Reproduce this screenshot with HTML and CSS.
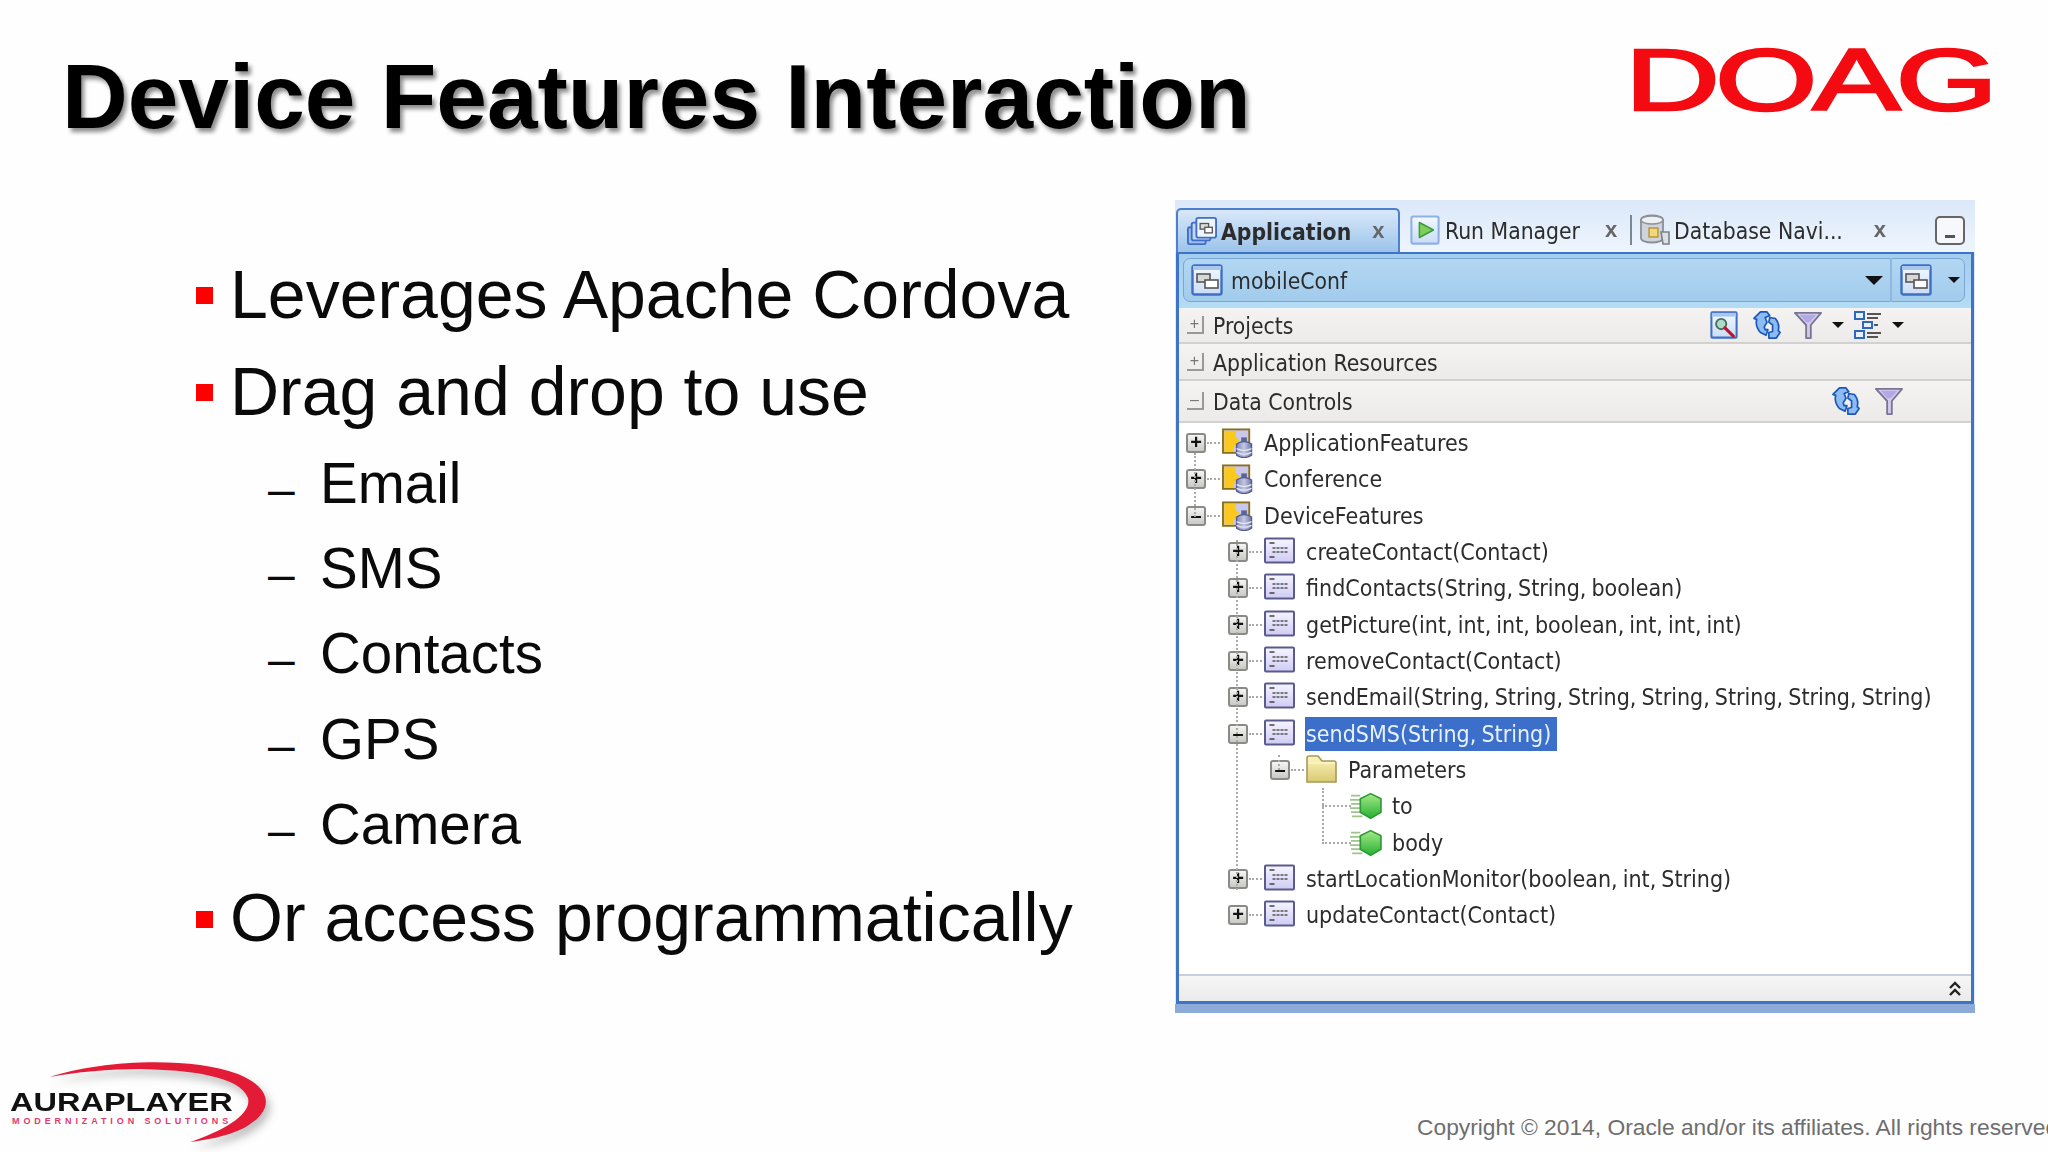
FILE: index.html
```html
<!DOCTYPE html>
<html lang="en">
<head>
<meta charset="utf-8">
<title>Device Features Interaction</title>
<link rel="stylesheet" href="styles.css">
</head>
<body>
<svg class="defs" width="0" height="0">
  <defs>
    <linearGradient id="pg" x1="0" y1="0" x2="0" y2="1"><stop offset="0" stop-color="#f6f5ff"/><stop offset="1" stop-color="#cfcbf4"/></linearGradient>
    <linearGradient id="fg" x1="0" y1="0" x2="0" y2="1"><stop offset="0" stop-color="#fdf6c0"/><stop offset="1" stop-color="#d9c970"/></linearGradient>
    <linearGradient id="gg" x1="0" y1="0" x2="0" y2="1"><stop offset="0" stop-color="#a6ea8a"/><stop offset="1" stop-color="#25b030"/></linearGradient>
    <linearGradient id="wg" x1="0" y1="0" x2="0" y2="1"><stop offset="0" stop-color="#f4f9ff"/><stop offset="1" stop-color="#c9dcf6"/></linearGradient>
    <linearGradient id="cy" x1="0" y1="0" x2="1" y2="0"><stop offset="0" stop-color="#7f86b8"/><stop offset=".5" stop-color="#c4c8e2"/><stop offset="1" stop-color="#6e74a6"/></linearGradient>
    <symbol id="win" viewBox="0 0 32 32"><rect x="1.5" y="1.5" width="29" height="29" rx="2" fill="url(#wg)" stroke="#3f6fc4" stroke-width="2.4"/><rect x="2" y="2" width="28" height="4" fill="#a9c7ee"/><rect x="6" y="10" width="13" height="8" fill="#d8d8d8" stroke="#555" stroke-width="1.6"/><rect x="14" y="16" width="13" height="8" fill="#fff" stroke="#555" stroke-width="1.6"/></symbol>
    <symbol id="app" viewBox="0 0 32 32"><rect x="1" y="12" width="19" height="18" rx="2" fill="#9dbdec" stroke="#3f6fc4" stroke-width="2"/><rect x="5" y="7" width="20" height="19" rx="2" fill="#c4d8f5" stroke="#3f6fc4" stroke-width="2"/><rect x="10" y="2" width="21" height="21" rx="2" fill="#eef4fd" stroke="#3f6fc4" stroke-width="2"/><rect x="14" y="8" width="9" height="6" fill="#ddd" stroke="#555" stroke-width="1.4"/><rect x="19" y="12" width="8" height="6" fill="#fff" stroke="#555" stroke-width="1.4"/></symbol>
    <symbol id="run" viewBox="0 0 32 32"><rect x="1.5" y="1.5" width="29" height="29" rx="2" fill="url(#wg)" stroke="#8fb0e2" stroke-width="2.2"/><path d="M10 8 L25 16 L10 24 Z" fill="#7ed05a" stroke="#3c9a3c" stroke-width="1.6" stroke-linejoin="round"/></symbol>
    <symbol id="db" viewBox="0 0 32 32"><path d="M2 6 C2 0 24 0 24 6 V24 C24 30 2 30 2 24 Z" fill="#cfd3da" stroke="#8a8f99" stroke-width="1.8"/><ellipse cx="13" cy="6" rx="11" ry="4" fill="#eef0f3" stroke="#8a8f99" stroke-width="1.4"/><rect x="10" y="14" width="9" height="9" fill="#f3d77a" stroke="#a98a26" stroke-width="1.2"/><path d="M22 18 h8 v12 h-6 z" fill="#dde1e6" stroke="#7b808a" stroke-width="1.6"/></symbol>
    <symbol id="find" viewBox="0 0 30 30"><rect x="1.5" y="1.5" width="27" height="27" rx="1" fill="url(#wg)" stroke="#3f6fc4" stroke-width="2.2"/><rect x="2" y="2" width="26" height="4" fill="#a9c7ee"/><circle cx="12" cy="14" r="5.5" fill="#a9dcc9" stroke="#4b6a5c" stroke-width="2"/><path d="M16 18 L25 27" stroke="#c0142c" stroke-width="3.4" stroke-linecap="round"/></symbol>
    <symbol id="sync" viewBox="0 0 30 30"><path d="M8 1 H15 L18 5 L13 7 L15 12 L12 17 L13 20 H16 L14 26 L8 23 Q2 16 4 9 L1 8 Z" fill="#8cbcf2" stroke="#1c57b8" stroke-width="1.8" stroke-linejoin="round"/><path d="M18 7 L24 8 Q29 14 27 21 L29 23 L25 29 H17 V23 L21 22 L21 15 L17 12 Z" fill="#8cbcf2" stroke="#1c57b8" stroke-width="1.8" stroke-linejoin="round"/></symbol>
    <symbol id="filter" viewBox="0 0 30 30"><path d="M1 2 H29 L18 15 V29 H13 V15 Z" fill="#d3cdf0" stroke="#7a7690" stroke-width="2" stroke-linejoin="round"/><path d="M6 4 H24 L17 12 H13 Z" fill="#b2a9e6"/></symbol>
    <symbol id="hier" viewBox="0 0 28 28"><rect x="1" y="1" width="9" height="7" fill="#e8f1ff" stroke="#2e66c0" stroke-width="2"/><rect x="9" y="11" width="9" height="6" fill="#e8f1ff" stroke="#2e66c0" stroke-width="2"/><rect x="1" y="20" width="9" height="7" fill="#e8f1ff" stroke="#2e66c0" stroke-width="2"/><path d="M13 3 H27 M13 7 H24 M20 14 H24 M13 22 H27 M13 26 H24" stroke="#555" stroke-width="2"/></symbol>
    <symbol id="df" viewBox="0 0 34 32"><rect x="1.5" y="1.5" width="28" height="25" fill="#c9c8ea" stroke="#8a6f20" stroke-width="2"/><path d="M3 3 H15 V9 L19 13 L13 21 V25 H3 Z" fill="#fbc81e"/><path d="M21 10 H27 V15 H21 Z" fill="#5d6496"/><path d="M16 17 Q24 12 32 17 V29 Q24 34 16 29 Z" fill="url(#cy)" stroke="#4f5a8f" stroke-width="1.4"/><path d="M16 22 Q24 26 32 22 M16 26 Q24 30 32 26" fill="none" stroke="#e6e8f4" stroke-width="1.2"/></symbol>
    <symbol id="method" viewBox="0 0 32 30"><rect x="1.5" y="1.5" width="29" height="24" rx="1" fill="url(#pg)" stroke="#5b5a8c" stroke-width="2"/><path d="M6 6 H11 M6 20 H11" stroke="#444" stroke-width="1.6"/><path d="M9 11 H25 M9 15 H25" stroke="#555" stroke-width="1.6" stroke-dasharray="3 1"/></symbol>
    <symbol id="folder" viewBox="0 0 33 30"><path d="M2 27 V3 Q2 1 4 1 H13 L17 6 H29 Q31 6 31 8 V27 Z" fill="url(#fg)" stroke="#a8995a" stroke-width="1.6"/><path d="M3 8 H30" stroke="#fff7c8" stroke-width="1.4"/></symbol>
    <symbol id="attr" viewBox="0 0 32 28"><path d="M1 4 H10 M0 8 H10 M1 12 H10 M0 16 H10 M1 20 H10 M2 24 H12" stroke="#9cc58a" stroke-width="1.6"/><path d="M20 2 L30 7 V20 L20 26 L10 20 V7 Z" fill="url(#gg)" stroke="#2b9a34" stroke-width="1.6" stroke-linejoin="round"/></symbol>
  </defs>
</svg>

<div class="slide">
  <header class="head">
    <h1 class="title">Device Features Interaction</h1>
    <div class="doag">DOAG</div>
  </header>

  <main class="main">
    <ul class="points">
      <li class="pt"><span class="sq"></span>Leverages Apache Cordova</li>
      <li class="pt"><span class="sq"></span>Drag and drop to use</li>
      <li class="sub"><span class="dash">–</span>Email</li>
      <li class="sub"><span class="dash">–</span>SMS</li>
      <li class="sub"><span class="dash">–</span>Contacts</li>
      <li class="sub"><span class="dash">–</span>GPS</li>
      <li class="sub"><span class="dash">–</span>Camera</li>
      <li class="pt last"><span class="sq"></span>Or access programmatically</li>
    </ul>

    <section class="ide">
      <div class="tabs">
        <div class="tab active">
          <svg class="i30"><use href="#app"/></svg><b class="tname">Application</b><span class="x">x</span>
        </div>
        <div class="tab run">
          <svg class="i30"><use href="#run"/></svg><span class="tname">Run Manager</span><span class="x">x</span>
        </div>
        <span class="tsep"></span>
        <div class="tab dbt">
          <svg class="i32"><use href="#db"/></svg><span class="tname">Database Navi...</span><span class="x">x</span>
        </div>
        <span class="mini"><span class="minibar"></span></span>
      </div>
      <div class="box">
        <div class="band">
          <div class="combo">
            <svg class="i32"><use href="#win"/></svg>
            <span class="cname">mobileConf</span>
            <span class="arrow big"></span>
            <span class="csplit"></span>
            <svg class="i32"><use href="#win"/></svg>
            <span class="arrow small ca"></span>
          </div>
        </div>
        <div class="acc a1">
          <span class="tg">+</span><span class="aname">Projects</span>
          <span class="tools t1">
            <svg class="i28"><use href="#find"/></svg>
            <svg class="i28 g15"><use href="#sync"/></svg>
            <svg class="i28 g13"><use href="#filter"/></svg>
            <span class="arrow small g10"></span>
            <svg class="i28 g10"><use href="#hier"/></svg>
            <span class="arrow small g10"></span>
          </span>
        </div>
        <div class="acc a2"><span class="tg">+</span><span class="aname">Application Resources</span></div>
        <div class="acc a3">
          <span class="tg">–</span><span class="aname">Data Controls</span>
          <span class="tools t3">
            <svg class="i28"><use href="#sync"/></svg>
            <svg class="i28 g15"><use href="#filter"/></svg>
          </span>
        </div>
        <div class="tree">
          <span class="vl v0"></span><span class="vl v1"></span><span class="vl v2"></span><span class="vl v3"></span>
          <div class="row l0"><span class="ex">+</span><span class="dots"></span><svg class="ic"><use href="#df"/></svg><span class="lb">ApplicationFeatures</span></div>
          <div class="row l0"><span class="ex">+</span><span class="dots"></span><svg class="ic"><use href="#df"/></svg><span class="lb">Conference</span></div>
          <div class="row l0"><span class="ex">–</span><span class="dots"></span><svg class="ic"><use href="#df"/></svg><span class="lb">DeviceFeatures</span></div>
          <div class="row l1"><span class="ex">+</span><span class="dots"></span><svg class="ic"><use href="#method"/></svg><span class="lb">createContact(Contact)</span></div>
          <div class="row l1"><span class="ex">+</span><span class="dots"></span><svg class="ic"><use href="#method"/></svg><span class="lb">findContacts(String, String, boolean)</span></div>
          <div class="row l1"><span class="ex">+</span><span class="dots"></span><svg class="ic"><use href="#method"/></svg><span class="lb">getPicture(int, int, int, boolean, int, int, int)</span></div>
          <div class="row l1"><span class="ex">+</span><span class="dots"></span><svg class="ic"><use href="#method"/></svg><span class="lb">removeContact(Contact)</span></div>
          <div class="row l1"><span class="ex">+</span><span class="dots"></span><svg class="ic"><use href="#method"/></svg><span class="lb">sendEmail(String, String, String, String, String, String, String)</span></div>
          <div class="row l1"><span class="ex">–</span><span class="dots"></span><svg class="ic"><use href="#method"/></svg><span class="lb sel">sendSMS(String, String)</span></div>
          <div class="row l2"><span class="ex">–</span><span class="dots"></span><svg class="ic"><use href="#folder"/></svg><span class="lb">Parameters</span></div>
          <div class="row l3"><span class="dots"></span><svg class="ic"><use href="#attr"/></svg><span class="lb">to</span></div>
          <div class="row l3"><span class="dots"></span><svg class="ic"><use href="#attr"/></svg><span class="lb">body</span></div>
          <div class="row l1"><span class="ex">+</span><span class="dots"></span><svg class="ic"><use href="#method"/></svg><span class="lb">startLocationMonitor(boolean, int, String)</span></div>
          <div class="row l1"><span class="ex">+</span><span class="dots"></span><svg class="ic"><use href="#method"/></svg><span class="lb">updateContact(Contact)</span></div>
        </div>
        <div class="bottom"><svg class="chev" viewBox="0 0 12 16"><path d="M1 7 L6 2 L11 7 M1 14 L6 9 L11 14" fill="none" stroke="#222" stroke-width="2.4"/></svg></div>
      </div>
      <div class="strip"></div>
    </section>
  </main>

  <footer class="foot">
    <div class="aura">
      <svg class="swoosh" viewBox="0 0 280 100"><path d="M50 25 C100 8 190 4 238 22 C272 36 276 58 244 76 C226 85 205 88 190 90 C225 78 252 62 248 46 C240 24 190 18 140 17 C110 17 75 20 50 25 Z" fill="#e31b36"/></svg>
      <div class="aname1">AURAPLAYER</div>
      <div class="aname2">MODERNIZATION SOLUTIONS</div>
    </div>
    <div class="copy">Copyright © 2014, Oracle and/or its affiliates. All rights reserved.</div>
  </footer>
</div>
</body>
</html>
```
FILE: styles.css
```css
* { box-sizing: border-box; }
html, body { margin: 0; padding: 0; background: #fefefe; }
.defs { position: absolute; }
.slide {
  width: 2048px; height: 1152px; overflow: hidden;
  display: flex; flex-direction: column;
  font-family: "Liberation Sans", Arial, sans-serif; color: #0a0a0a;
}
.head { height: 200px; display: flex; justify-content: space-between; padding: 44px 0 0 62px; }
.title {
  margin: 0; font-size: 91px; line-height: 106px; font-weight: 700; color: #000;
  text-shadow: 3px 4px 4px rgba(0,0,0,.45);
}
.doag {
  width: 423px; height: 100px; margin-top: -14px;
  font-size: 88px; line-height: 100px; font-weight: 400; color: #f40b12;
  -webkit-text-stroke: 2.5px #f40b12;
  transform: scaleX(1.49); transform-origin: left center; white-space: nowrap;
  letter-spacing: -3px;
}
.main { flex: 0 0 813px; display: flex; }
.points { list-style: none; margin: 0; padding: 45px 0 0 196px; width: 1175px; flex: none; }
.pt { display: flex; align-items: center; height: 97px; font-size: 68px; white-space: nowrap; }
.sq { width: 17px; height: 17px; background: #f00; margin: 4px 17px 0 0; flex: none; }
.sub { display: flex; align-items: center; height: 85.4px; font-size: 56.5px; padding-left: 72px; }
.pt + .sub { margin-top: 1.5px; }
.dash { width: 52px; flex: none; font-size: 48px; padding-top: 12px; }
.last { margin-top: 1.5px; }

.ide {
  width: 800px; height: 813px; display: flex; flex-direction: column; flex: none;
  background: #dfeafa; filter: blur(.6px);
  font-family: "DejaVu Sans", sans-serif; font-stretch: condensed; color: #2c2c2c;
  font-size: 22.7px;
}
.tabs { height: 52px; flex: none; display: flex; align-items: center; background: linear-gradient(#dbe8f9, #eef5fd); padding-top: 8px; }
.tab { display: flex; align-items: center; height: 44px; }
.tab.active {
  width: 224px; margin-left: 1px; padding-left: 9px; gap: 4px;
  background: linear-gradient(#d9e8fa, #9cc3ea); border: 2px solid #4c7fce; border-bottom: 0; border-radius: 5px 5px 0 0;
}
.tname { padding-top: 2px; }
.active .x { margin-left: 17px; }
.run { width: 230px; padding-left: 10px; gap: 5px; }
.run .x { margin-left: 20px; }
.tsep { width: 2px; height: 30px; background: #7c8794; }
.dbt { padding-left: 7px; gap: 3px; width: 303px; }
.dbt .x { margin-left: 28px; }
.x { font-weight: 700; color: #666; font-size: 22px; font-family: "Liberation Sans", sans-serif; }
.i30 { width: 30px; height: 30px; flex: none; }
.i32 { width: 32px; height: 32px; flex: none; }
.i28 { width: 28px; height: 28px; flex: none; }
.mini { width: 30px; height: 29px; border: 2px solid #666; border-radius: 5px; background: #f6f8fb; display: flex; align-items: flex-end; justify-content: center; padding-bottom: 5px; }
.minibar { width: 10px; height: 3px; background: #555; }

.box { flex: 1; min-height: 0; display: flex; flex-direction: column; border: solid #3d74c8; border-width: 2px 3px 3px 3px; background: #fff; margin: 0 1px 0 1px; }
.band { height: 54px; flex: none; background: linear-gradient(#a4cdee, #b5dcf5); padding: 4px 6px 6px 4px; }
.combo { height: 44px; display: flex; align-items: center; padding-left: 7px; border: 1px solid #79a6d4; border-radius: 7px; background: linear-gradient(#b2d7f2, #a2cbec); }
.cname { margin-left: 8px; flex: 1; padding-top: 2px; }
.arrow { width: 0; height: 0; border-style: solid; border-color: #111 transparent transparent; display: inline-block; flex: none; }
.arrow.big { border-width: 9px 9px 0; }
.arrow.small { border-width: 6px 6px 0; }
.csplit { width: 2px; height: 44px; background: #8fb8de; margin: 0 8px 0 7px; }
.ca { margin: 0 4px 0 16px; }
.acc { display: flex; flex: none; align-items: center; padding-left: 8px; background: linear-gradient(#f4f3f1, #ecebe9); border-bottom: 2px solid #d2d1cf; }
.a1 { height: 36px; }
.a2 { height: 37px; }
.a3 { height: 42px; }
.tg { width: 17px; height: 18px; color: #777; border-right: 2px solid #999; border-bottom: 2px solid #999; font-size: 16px; line-height: 16px; text-align: center; margin-right: 9px; font-family: "Liberation Sans", sans-serif; flex: none; }
.aname { flex: none; padding-top: 2px; }
.tools { display: flex; align-items: center; margin-left: auto; }
.t1 { margin-right: 67px; }
.t3 { margin-right: 68px; }
.g15 { margin-left: 15px; }
.g13 { margin-left: 13px; }
.g10 { margin-left: 10px; }

.tree { flex: 1; min-height: 0; padding-top: 2px; position: relative; font-size: 23px; word-spacing: -1.5px; }
.row { height: 36.33px; display: flex; align-items: center; white-space: nowrap; }
.l0 { padding-left: 7px; }
.l1 { padding-left: 49px; }
.l2 { padding-left: 91px; }
.l3 { padding-left: 143px; }
.ex {
  width: 20px; height: 20px; flex: none; border: 2px solid #8a8a86; border-radius: 3px;
  background: linear-gradient(#f5f5f3, #c9c9c5); color: #111; font: 700 20px/15px "Liberation Sans", sans-serif; text-align: center;
}
.dots { width: 13px; height: 0; border-top: 2px dotted #aaa; flex: none; margin: 0 1px; }
.l3 .dots { width: 29px; margin: 0 -1px 0 0; }
.ic { width: 33px; height: 30px; flex: none; }
.lb { margin-left: 9px; padding: 3px 1px; line-height: 28px; }
.l3 .lb { margin-left: 8px; }
.sel { background: #3b6fca; color: #e8f1fb; margin-left: 9px; padding: 3px 6px 3px 1px; }
.vl { position: absolute; width: 0; border-left: 2px dotted #aaa; }
.v0 { left: 15px; top: 30px; height: 64px; }
.v1 { left: 57px; top: 117px; height: 350px; }
.v2 { left: 99px; top: 332px; height: 15px; }
.v3 { left: 143px; top: 365px; height: 56px; }
.bottom { height: 27px; flex: none; border-top: 2px solid #c6cfe0; background: linear-gradient(#f6f6f6, #ebebeb); display: flex; justify-content: flex-end; align-items: center; padding-right: 10px; }
.chev { width: 12px; height: 16px; }
.strip { height: 9px; flex: none; background: #8cabd8; }

.foot { flex: 1; display: flex; justify-content: space-between; align-items: flex-end; position: relative; }
.aura { width: 280px; height: 100px; position: relative; }
.swoosh { position: absolute; left: 0; top: 0; width: 280px; height: 100px; filter: drop-shadow(4px 6px 4px rgba(0,0,0,.25)); }
.aname1 { position: absolute; left: 10px; top: 36px; font: 700 25px/28px "Liberation Sans", sans-serif; color: #111; transform: scaleX(1.3); transform-origin: left center; }
.aname2 { position: absolute; left: 12px; top: 64px; font: 700 9px/11px "Liberation Sans", sans-serif; color: #e6386a; letter-spacing: 3.9px; white-space: nowrap; }
.copy { position: absolute; left: 1417px; bottom: 11px; font-size: 22.8px; line-height: 28px; color: #6e6e6e; white-space: nowrap; }
```
